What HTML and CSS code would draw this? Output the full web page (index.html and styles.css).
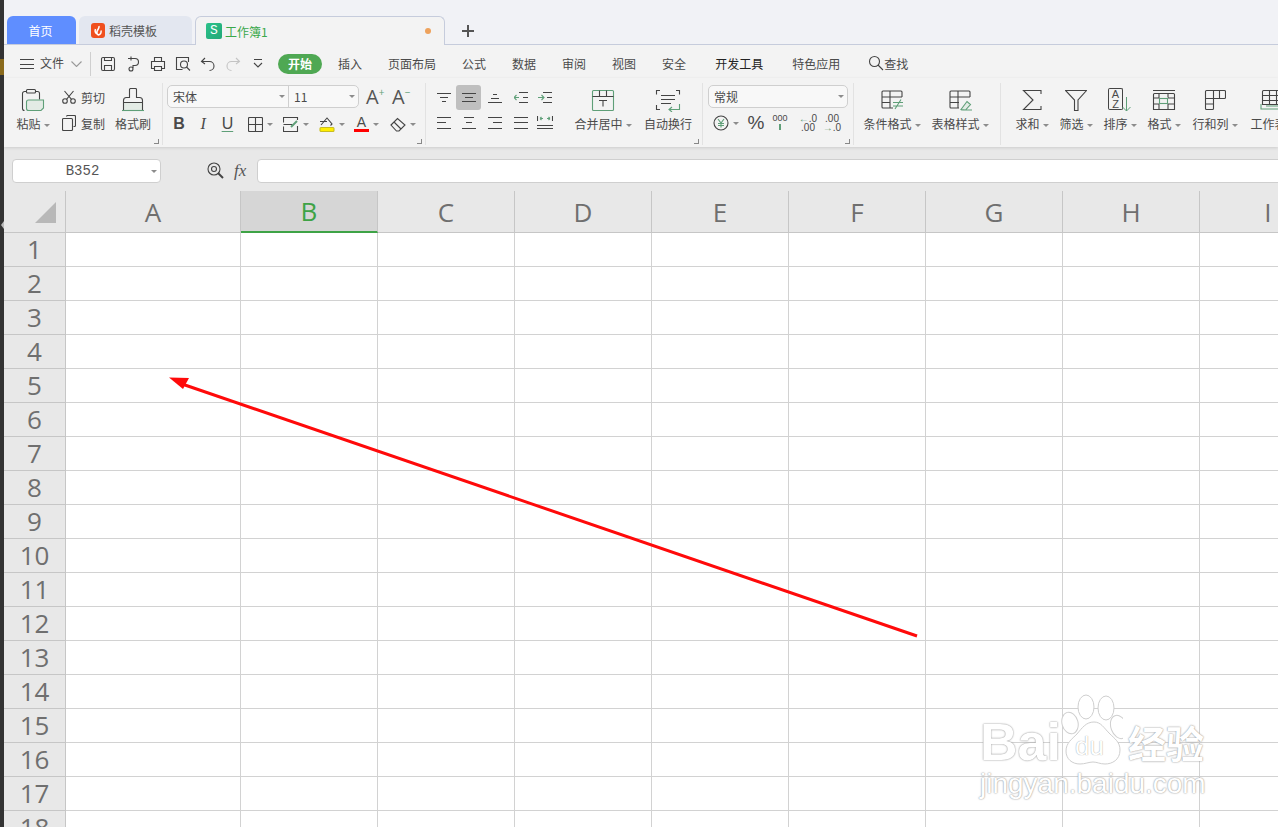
FILE: index.html
```html
<!DOCTYPE html>
<html lang="zh-CN">
<head>
    <meta charset="UTF-8">
    <title>工作簿1</title>
    <link rel="stylesheet" href="styles.css">
</head>
<body>
<aside class="side"><i class="side-gold"></i><i class="side-arrow"></i></aside>
<div class="app">

    <!-- onglets -->
    <div class="tabbar">
        <div class="tab tab-home">首页</div>
        <div class="tab tab-tpl">
            <svg class="logo" width="14" height="15" viewBox="0 0 14 15"><rect width="14" height="15" rx="3" fill="#f0501e"/><path d="M8 3c.5 2.500-1.500 3.500-2 5.500-.4 1.500.3 3 1.500 3.500 2-.5 3-2.500 2.500-4.500M4.500 6c-.8 2 0 4 1.500 5" fill="none" stroke="#fff" stroke-width="1.500"/></svg>
            稻壳模板
        </div>
        <div class="tab tab-book">
            <span class="logo-s">S</span>
            <span class="book-name">工作簿1</span>
            <i class="dot"></i>
        </div>
        <div class="plus">
            <svg width="12" height="12" viewBox="0 0 12 12"><path d="M6 0v12M0 6h12" stroke="#555" stroke-width="2"/></svg>
        </div>
    </div>

    <!-- menu -->
    <div class="menubar">
        <svg class="ic" width="14" height="12" viewBox="0 0 14 12"><path d="M0 1.500h14M0 6.500h14M0 10.500h14"/></svg>
        <span class="file">文件</span>
        <svg class="ic chev" width="11" height="6" viewBox="0 0 11 6"><path d="M.5.500l5 5 5-5"/></svg>
        <i class="menu-sep"></i>
        <div class="quick">
            <span><svg class="ic" width="16" height="16" viewBox="0 0 16 16"><path d="M3 1.500h10a1.500 1.500 0 0 1 1.500 1.500v10a1.500 1.500 0 0 1-1.500 1.500H3A1.500 1.500 0 0 1 1.500 13V3A1.500 1.500 0 0 1 3 1.500zM4.500 14.500v-5h7v5M4.500 1.500v3h7v-3"/></svg></span>
            <span><svg class="ic" width="16" height="16" viewBox="0 0 16 16"><path d="M6 2.500h4a3.500 3.500 0 0 1 0 7H8v2.500M3 2.500h3M6 .5v4"/><circle cx="6" cy="13" r="2"/></svg></span>
            <span><svg class="ic" width="16" height="16" viewBox="0 0 16 16"><path d="M4.500 5.500v-4h7v4M4.500 12.500h-3v-7h13v7h-3M4.500 10.500h7v4h-7z"/></svg></span>
            <span><svg class="ic" width="16" height="16" viewBox="0 0 16 16"><path d="M13.500 6V1.500h-12v12h6"/><circle cx="9" cy="8.500" r="3.500"/><path d="M11.500 11l3.500 3.500"/></svg></span>
            <span><svg class="ic" width="16" height="16" viewBox="0 0 16 16"><path d="M5 2L1.500 5.500 5 8M1.500 5.500h8a4.500 4.500 0 0 1 0 9"/></svg></span>
            <span><svg class="ic ic-off" width="16" height="16" viewBox="0 0 16 16"><path d="M11 2l3.500 3.500L11 8M14.500 5.500h-8a4.500 4.500 0 0 0 0 9"/></svg></span>
            <span><svg class="ic" width="12" height="10" viewBox="0 0 12 10"><path d="M2 .5h8M2 4l4 4 4-4"/></svg></span>
        </div>
        <div class="pill">开始</div>
        <nav class="menu-tabs">
            <a>插入</a>
            <a>页面布局</a>
            <a>公式</a>
            <a>数据</a>
            <a>审阅</a>
            <a>视图</a>
            <a>安全</a>
            <a class="menu-dev">开发工具</a>
            <a class="menu-extra">特色应用</a>
        </nav>
        <div class="find">
            <svg class="ic" width="16" height="16" viewBox="0 0 16 16"><circle cx="6.500" cy="6.500" r="5"/><path d="M10 10l5 5"/></svg>
            查找
        </div>
    </div>

    <!-- ruban -->
    <div class="ribbon">
        <section class="group g-clip">
            <div class="big w-paste">
                <svg class="ic" width="24" height="24" viewBox="0 0 24 24"><path d="M3.500 22.500a2 2 0 0 1-2-2v-15a2 2 0 0 1 2-2h13a2 2 0 0 1 2 2v6"/><rect x="5.500" y="1.500" width="9" height="3.500" rx="1" class="paper"/><path d="M5.500 14a2 2 0 0 1 2-2h15v8l-2.500 2.500H7.500a2 2 0 0 1-2-2z" class="gfill"/></svg>
                <span class="label">粘贴<i class="caret"></i></span>
            </div>
            <div class="stack">
                <div class="small">
                    <svg class="ic" width="14" height="14" viewBox="0 0 14 14"><circle cx="3" cy="11" r="2.300"/><circle cx="11" cy="11" r="2.300"/><path d="M4.500 9.300L11.500 1M9.500 9.300L2.500 1"/></svg>
                    剪切
                </div>
                <div class="small">
                    <svg class="ic" width="14" height="16" viewBox="0 0 14 16"><path d="M4.500 1.500a1 1 0 0 1 1-1h7a1 1 0 0 1 1 1v9a1 1 0 0 1-1 1h-1"/><rect x=".5" y="3.500" width="10" height="12" rx="1" class="paper"/></svg>
                    复制
                </div>
            </div>
            <div class="big w-brush">
                <svg class="ic" width="22" height="24" viewBox="0 0 22 24"><path d="M1.500 14.500h19v8h-19z" class="gfill gfill-noline"/><path d="M8.500 .5h5a1 1 0 0 1 1 1v8h3a3 3 0 0 1 3 3v10M1.500 22.500v-10a3 3 0 0 1 3-3h3v-8a1 1 0 0 1 1-1M1.500 14.500h19"/><path d="M0 22.500h22" class="gline"/></svg>
                <span class="label">格式刷</span>
            </div>
            <i class="launcher"></i>
        </section>

        <section class="group g-font">
            <div class="font-row">
                <div class="fontbox">
                    <div class="font-name">宋体<i class="caret"></i></div>
                    <div class="font-size">11<i class="caret"></i></div>
                </div>
                <span class="grow-a">A<sup>+</sup></span>
                <span class="grow-a grow-b">A<sup>−</sup></span>
            </div>
            <div class="fmt-row">
                <span class="fmt fmt-b">B</span>
                <span class="fmt fmt-i">I</span>
                <span class="fmt fmt-u">U</span>
                <div class="tools">
                    <span class="tool"><svg class="ic" width="15" height="15" viewBox="0 0 15 15"><rect x=".5" y=".5" width="14" height="14" rx="1"/><path d="M7.500 .5v14M.5 7.500h14"/></svg><i class="caret"></i></span>
                    <span class="tool"><svg class="ic" width="16" height="15" viewBox="0 0 16 15"><path d="M14.500 3V.5H.5v5M.5 9.500v5h14V9M.5 7.500h9"/><path d="M8 10l6-6" class="gline2"/></svg><i class="caret"></i></span>
                    <span class="tool"><svg class="ic" width="16" height="16" viewBox="0 0 16 16"><path d="M2 9l6-7 5 6-1.500 1.500M1 5.500h7"/><rect x="1" y="11.500" width="14" height="4" rx="1" class="yellow"/></svg><i class="caret"></i></span>
                    <span class="tool"><span class="color-a">A</span><i class="caret"></i></span>
                    <span class="tool"><svg class="ic" width="16" height="15" viewBox="0 0 16 15"><path d="M1 8l6.500-6.500L15 8l-6 6H6.500zM4 5l7 7"/></svg><i class="caret"></i></span>
                </div>
            </div>
            <i class="launcher"></i>
        </section>

        <section class="group g-align">
            <div class="align-grid">
                <span><svg class="ic" width="14" height="9" viewBox="0 0 14 9"><path d="M0 .5h14M3 4.500h8M5 8.500h4"/></svg></span>
                <span class="on"><svg class="ic" width="14" height="9" viewBox="0 0 14 9"><path d="M0 .5h14M3 4.500h8M0 8.500h14"/></svg></span>
                <span><svg class="ic" width="14" height="11" viewBox="0 0 14 11"><path d="M5 2.500h4M3 6.500h8M0 10.500h14"/></svg></span>
                <span><svg class="ic" width="14" height="11" viewBox="0 0 14 11"><path d="M5 .5h9M9 5.500h5M5 10.500h9"/><path d="M5 5.500H0M2.500 3L0 5.500 2.500 8" class="gline"/></svg></span>
                <span><svg class="ic" width="14" height="11" viewBox="0 0 14 11"><path d="M5 .5h9M9 5.500h5M5 10.500h9"/><path d="M0 5.500h6M3.500 3L6 5.500 3.500 8" class="gline"/></svg></span>
                <span><svg class="ic" width="14" height="12" viewBox="0 0 14 12"><path d="M0 .5h14M0 5.500h9M0 11.500h14"/></svg></span>
                <span><svg class="ic" width="14" height="12" viewBox="0 0 14 12"><path d="M2 .5h10M4 5.500h6M0 11.500h14"/></svg></span>
                <span><svg class="ic" width="14" height="12" viewBox="0 0 14 12"><path d="M0 .5h14M5 5.500h9M0 11.500h14"/></svg></span>
                <span><svg class="ic" width="14" height="12" viewBox="0 0 14 12"><path d="M0 .5h14M0 5.500h14M0 11.500h14"/></svg></span>
                <span><svg class="ic" width="16" height="13" viewBox="0 0 16 13"><path d="M.5 0v5M15.500 0v5M0 9.500h16M0 12.500h16"/><path d="M3 2.500h3M3 2.500l1.500-1.500M3 2.500l1.500 1.500M13 2.500h-3M13 2.500l-1.500-1.500M13 2.500l-1.500 1.500" class="gline"/></svg></span>
            </div>
            <div class="big w-merge">
                <svg class="ic" width="24" height="24" viewBox="0 0 24 24"><path d="M2.500 2.500h19a1 1 0 0 1 1 1v18a1 1 0 0 1-1 1h-19a1 1 0 0 1-1-1v-18a1 1 0 0 1 1-1z" class="gline"/><path d="M1.500 8.500h21M8.500 2.500v6M15.500 2.500v6M8 12.500h8M12 12.500v6"/></svg>
                <span class="label">合并居中<i class="caret"></i></span>
            </div>
            <div class="big w-wrap">
                <svg class="ic" width="26" height="24" viewBox="0 0 26 24"><path d="M5 2.500H1.500v4M21 2.500h3.500v4M1.500 17v4.500H5M6 7.500h14M6 11.500h14M6 15.500h10"/><path d="M24.500 16v5.500H14M17 19l-3 2.500 3 2.500" class="gline"/></svg>
                <span class="label">自动换行</span>
            </div>
            <i class="launcher"></i>
        </section>

        <section class="group g-num">
            <div class="numbox">常规<i class="caret"></i></div>
            <div class="num-row">
                <span class="num-yen"><svg class="ic" width="16" height="16" viewBox="0 0 16 16"><circle cx="8" cy="8" r="7"/><path d="M5 4l3 4 3-4M8 8v4.500M5 8.500h6M5 10.500h6" class="gline"/></svg><i class="caret"></i></span>
                <span class="num-pct">%</span>
                <span class="num-cell num-k">000<i class="num-tick"></i></span>
                <span class="num-cell num-dec"><b><em>←</em>.0</b><b>.00</b></span>
                <span class="num-cell num-dec"><b>.00</b><b><em>→</em>.0</b></span>
            </div>
            <i class="launcher"></i>
        </section>

        <section class="group g-style">
            <div class="big w-style">
                <svg class="ic" width="24" height="22" viewBox="0 0 24 22"><path d="M22 8V3a1 1 0 0 0-1-1H3a1 1 0 0 0-1 1v15a1 1 0 0 0 1 1h10M2 8h20M2 13.500h8M10 2v17"/><path d="M13 13.500h10M13 17h10M21 10.500L15 20" class="gline"/></svg>
                <span class="label">条件格式<i class="caret"></i></span>
            </div>
            <div class="big w-style">
                <svg class="ic" width="24" height="22" viewBox="0 0 24 22"><path d="M22 8V3a1 1 0 0 0-1-1H3a1 1 0 0 0-1 1v15a1 1 0 0 0 1 1h8M2 8h20M2 13.500h9M10 2v17"/><path d="M13 20.500l6-8 3.500 3-5 5.500zM13 21h11" class="gfill gfill-line"/></svg>
                <span class="label">表格样式<i class="caret"></i></span>
            </div>
        </section>

        <section class="group g-data">
            <div class="big w-44">
                <svg class="ic" width="20" height="22" viewBox="0 0 20 22"><path d="M19 5V1.500H1.500L11 11 1.500 20.500H19V17"/></svg>
                <span class="label">求和<i class="caret"></i></span>
            </div>
            <div class="big w-44">
                <svg class="ic" width="22" height="22" viewBox="0 0 22 22"><path d="M.5 1.500h21L13 11v10.500H9.500V11z"/></svg>
                <span class="label">筛选<i class="caret"></i></span>
            </div>
            <div class="big w-44">
                <span class="az"><b>A</b><b>Z</b>
                    <svg class="az-arrow" width="9" height="15" viewBox="0 0 9 15"><path d="M4.500 0v14M.5 10l4 4 4-4" class="gline"/></svg>
                </span>
                <span class="label">排序<i class="caret"></i></span>
            </div>
            <div class="big w-44">
                <svg class="ic" width="24" height="22" viewBox="0 0 24 22"><path d="M1 1.500h22M2.500 4.500h19a1 1 0 0 1 1 1v15h-21v-15a1 1 0 0 1 1-1zM1.500 9h6M16 9h6.500M1.500 15h6M16 15h6.500M7 4.500v4M16 4.500v4M7 15v5.500M16 15v5.500"/><rect x="7.500" y="9.500" width="8" height="5" class="gline"/></svg>
                <span class="label">格式<i class="caret"></i></span>
            </div>
            <div class="big w-58">
                <svg class="ic" width="22" height="22" viewBox="0 0 22 22"><path d="M2.500 1.500h18a1 1 0 0 1 1 1v6a1 1 0 0 1-1 1H9.500v10a1 1 0 0 1-1 1h-6a1 1 0 0 1-1-1v-17a1 1 0 0 1 1-1zM1.500 9.500h8M9.500 1.500v8M15.500 1.500v8M1.500 15h8"/></svg>
                <span class="label">行和列<i class="caret"></i></span>
            </div>
            <div class="big w-58">
                <svg class="ic" width="26" height="22" viewBox="0 0 26 22"><path d="M3.500 1.500h19a1 1 0 0 1 1 1v13h-21v-13a1 1 0 0 1 1-1zM2.500 6.500h21M2.500 11.500h21M9.500 1.500v14M16.500 1.500v14"/><path d="M1 15v5h24v-5M6 17h14" class="gline"/></svg>
                <span class="label">工作表<i class="caret"></i></span>
            </div>
        </section>
    </div>

    <!-- barre de formule -->
    <div class="formula">
        <div class="namebox">B352<i class="caret"></i></div>
        <svg class="ic zoom" width="17" height="17" viewBox="0 0 17 17"><circle cx="7" cy="7" r="6"/><circle cx="7" cy="7" r="2.500"/><path d="M11 11l5 5" stroke-width="2"/></svg>
        <span class="fx">fx</span>
        <div class="formula-input"></div>
    </div>

    <!-- feuille -->
    <table class="sheet">
        <colgroup><col class="col-head"><col class="col-a"><col class="col-n" span="8"></colgroup>
        <thead>
            <tr>
                <th class="corner"><i></i></th>
                <th>A</th><th class="sel">B</th><th>C</th><th>D</th><th>E</th><th>F</th><th>G</th><th>H</th><th>I</th>
            </tr>
        </thead>
        <tbody>
            <tr><th>1</th><td></td><td></td><td></td><td></td><td></td><td></td><td></td><td></td><td></td></tr>
            <tr><th>2</th><td></td><td></td><td></td><td></td><td></td><td></td><td></td><td></td><td></td></tr>
            <tr><th>3</th><td></td><td></td><td></td><td></td><td></td><td></td><td></td><td></td><td></td></tr>
            <tr><th>4</th><td></td><td></td><td></td><td></td><td></td><td></td><td></td><td></td><td></td></tr>
            <tr><th>5</th><td></td><td></td><td></td><td></td><td></td><td></td><td></td><td></td><td></td></tr>
            <tr><th>6</th><td></td><td></td><td></td><td></td><td></td><td></td><td></td><td></td><td></td></tr>
            <tr><th>7</th><td></td><td></td><td></td><td></td><td></td><td></td><td></td><td></td><td></td></tr>
            <tr><th>8</th><td></td><td></td><td></td><td></td><td></td><td></td><td></td><td></td><td></td></tr>
            <tr><th>9</th><td></td><td></td><td></td><td></td><td></td><td></td><td></td><td></td><td></td></tr>
            <tr><th>10</th><td></td><td></td><td></td><td></td><td></td><td></td><td></td><td></td><td></td></tr>
            <tr><th>11</th><td></td><td></td><td></td><td></td><td></td><td></td><td></td><td></td><td></td></tr>
            <tr><th>12</th><td></td><td></td><td></td><td></td><td></td><td></td><td></td><td></td><td></td></tr>
            <tr><th>13</th><td></td><td></td><td></td><td></td><td></td><td></td><td></td><td></td><td></td></tr>
            <tr><th>14</th><td></td><td></td><td></td><td></td><td></td><td></td><td></td><td></td><td></td></tr>
            <tr><th>15</th><td></td><td></td><td></td><td></td><td></td><td></td><td></td><td></td><td></td></tr>
            <tr><th>16</th><td></td><td></td><td></td><td></td><td></td><td></td><td></td><td></td><td></td></tr>
            <tr><th>17</th><td></td><td></td><td></td><td></td><td></td><td></td><td></td><td></td><td></td></tr>
            <tr><th>18</th><td></td><td></td><td></td><td></td><td></td><td></td><td></td><td></td><td></td></tr>
        </tbody>
    </table>
</div>

<!-- fleche rouge -->
<svg class="arrow" width="1278" height="827" viewBox="0 0 1278 827">
    <path d="M917 636L182 384" stroke="#ff0a0a" stroke-width="3" fill="none"/>
    <path d="M169 377.500L189 378 183 389z" fill="#ff0a0a"/>
</svg>

<!-- filigrane -->
<div class="mark">
    <div class="mark-top">
        <span class="mark-bai">Bai</span>
        <span class="mark-paw">
            <svg width="62" height="72" viewBox="0 0 62 72">
                <ellipse cx="25" cy="14" rx="8" ry="12"/>
                <ellipse cx="45" cy="15" rx="8" ry="12"/>
                <ellipse cx="9" cy="30" rx="8" ry="11" transform="rotate(-15 9 30)"/>
                <ellipse cx="58" cy="34" rx="8" ry="12" transform="rotate(-20 58 34)"/>
                <path d="M33 29c7 0 10 6 15 11 6 6 11 9 11 17 0 10-8 14-15 14-5 0-8-2-12-2s-8 2-13 2C11 71 5 66 5 58c0-8 6-12 11-17 5-6 9-12 17-12z"/>
            </svg>
            <span class="mark-du">du</span>
        </span>
        <span class="mark-cn">经验</span>
    </div>
    <div class="mark-url">jingyan.baidu.com</div>
</div>
</body>
</html>
```

FILE: styles.css
```css
* {
    box-sizing: border-box;
}
html, body {
    margin: 0;
    height: 100%;
}
body {
    display: flex;
    width: 1278px;
    height: 827px;
    overflow: hidden;
    position: relative;
    background: #fff;
    font-family: "Noto Sans CJK SC", "Noto Sans", sans-serif;
    font-size: 12px;
    color: #4a4a4a;
}
i, em {
    font-style: normal;
}
svg {
    display: block;
    flex: none;
}

/* bande sombre a gauche */
.side {
    width: 4px;
    flex: none;
    background: #333;
    padding-top: 59px;
    position: relative;
}
.side-gold {
    display: block;
    height: 16px;
    background: #8a6a1c;
}
.side-arrow {
    position: absolute;
    left: 1px;
    top: 221px;
    border: 4px solid transparent;
    border-left-width: 0;
    border-right: 3px solid #bbb;
}
.app {
    width: 1274px;
    flex: none;
    overflow: hidden;
}

/* icones */
.ic {
    fill: none;
    stroke: #444;
    stroke-width: 1.1;
}
.ic-off {
    stroke: #c4c4c4;
}
.ic .paper {
    fill: #f3f3f3;
}
.ic .gfill {
    fill: #e3ebe5;
    stroke: #5f9f78;
}
.ic .gfill-noline {
    stroke: none;
}
.ic .gline, .gline {
    stroke: #5f9f78;
    fill: none;
}
.ic .gline2 {
    stroke: #5f9f78;
    stroke-width: 2;
}
.ic .yellow {
    fill: #ffee00;
    stroke: #c9bc22;
}
.caret {
    display: inline-block;
    width: 0;
    height: 0;
    margin-left: 3px;
    vertical-align: middle;
    border-left: 3px solid transparent;
    border-right: 3px solid transparent;
    border-top: 3px solid #8c8c8c;
}

/* onglets */
.tabbar {
    height: 45px;
    padding-left: 3px;
    display: flex;
    align-items: flex-end;
    background: #f1f2f6;
    border-bottom: 1px solid #c6ccdc;
}
.tab {
    height: 28px;
    display: flex;
    align-items: center;
    border-radius: 6px 6px 0 0;
}
.tab-home {
    width: 69px;
    justify-content: center;
    padding-right: 2px;
    background: #5f8eff;
    color: #fff;
}
.tab-tpl {
    width: 113px;
    margin-left: 3px;
    padding-left: 12px;
    gap: 4px;
    background: #e3e7f0;
    color: #555;
}
.tab-book {
    width: 250px;
    height: 29px;
    margin-left: 3px;
    margin-bottom: -1px;
    padding: 0 13px 0 10px;
    background: #f3f3f3;
    border: 1px solid #c6ccdc;
    border-bottom: none;
}
.logo-s {
    width: 16px;
    height: 16px;
    border-radius: 2px;
    background: linear-gradient(135deg, #2cc28a, #22a878);
    color: #fff;
    font: 13px/16px "Liberation Mono", monospace;
    text-align: center;
}
.book-name {
    margin-left: 3px;
    color: #3aa84a;
}
.dot {
    width: 6px;
    height: 6px;
    margin-left: auto;
    border-radius: 50%;
    background: #eea25c;
}
.plus {
    margin: 0 0 7px 17px;
}

/* menu */
.menubar {
    height: 33px;
    padding: 5px 0 0 16px;
    display: flex;
    align-items: center;
    background: #f3f3f3;
}
.file {
    margin: -3px 0 0 6px;
}
.chev {
    margin-left: 7px;
    stroke: #999;
}
.menu-sep {
    width: 1px;
    height: 24px;
    margin-left: 8px;
    background: #cfcfcf;
}
.quick {
    display: flex;
    margin-left: 4px;
    align-items: center;
}
.quick span {
    width: 25px;
    display: flex;
    justify-content: center;
}
.pill {
    width: 44px;
    height: 20px;
    margin-left: 8px;
    border-radius: 10px;
    background: #4fa853;
    color: #fff;
    font-weight: 700;
    line-height: 19px;
    text-align: center;
}
.menu-tabs {
    display: flex;
    gap: 26px;
    margin: -2px 0 0 16px;
}
.menu-dev {
    margin-left: 3px;
    color: #222;
}
.menu-extra {
    margin-left: 3px;
}
.find {
    display: flex;
    align-items: center;
    margin: -2px 0 0 28px;
}

/* ruban */
.ribbon {
    height: 69px;
    padding-top: 5px;
    display: flex;
    background: #f3f3f3;
    box-shadow: 0 1px 3px rgba(0, 0, 0, .12);
    position: relative;
}
.group {
    height: 62px;
    flex: none;
    position: relative;
    border-right: 1px solid #e2e2e2;
}
.launcher {
    position: absolute;
    right: 3px;
    bottom: 1px;
    width: 5px;
    height: 5px;
    border-right: 1px solid #888;
    border-bottom: 1px solid #888;
}
.big {
    height: 62px;
    padding-top: 5px;
    flex: none;
    display: flex;
    flex-direction: column;
    align-items: center;
}
.big > svg, .big > .az {
    height: 24px;
}
.label {
    margin-top: 4px;
    line-height: 16px;
    white-space: nowrap;
}
.w-paste {
    width: 38px;
}
.w-brush {
    width: 50px;
}
.w-merge {
    width: 60px;
    margin-left: 16px;
}
.w-wrap {
    width: 66px;
    margin-left: 2px;
}
.w-style {
    width: 68px;
}
.w-44 {
    width: 44px;
}
.w-58 {
    width: 58px;
}
.g-clip {
    width: 159px;
    padding-left: 10px;
    display: flex;
}
.stack {
    width: 46px;
    margin-left: 10px;
    padding-top: 1px;
}
.small {
    height: 26px;
    display: flex;
    align-items: center;
    gap: 5px;
}

/* police */
.g-font {
    width: 263px;
    padding-left: 4px;
}
.font-row {
    height: 23px;
    margin-top: 2px;
    display: flex;
    align-items: center;
}
.fontbox {
    width: 192px;
    height: 23px;
    display: flex;
    background: #f8f8f8;
    border: 1px solid #cfcfcf;
    border-radius: 5px;
}
.font-name, .font-size, .numbox {
    display: flex;
    align-items: center;
    justify-content: space-between;
    padding: 0 3px 0 5px;
}
.font-name {
    width: 121px;
    border-right: 1px solid #cfcfcf;
}
.font-size {
    flex: 1;
}
.grow-a {
    width: 25px;
    margin-left: 7px;
    font: 20px/23px "Open Sans", sans-serif;
    color: #555;
    white-space: nowrap;
}
.grow-b {
    margin-left: 1px;
}
.grow-a sup {
    font-size: 10px;
    line-height: 0;
    color: #5f9f78;
}
.fmt-row {
    height: 26px;
    margin-top: 3px;
    display: flex;
    align-items: center;
}
.fmt {
    width: 25px;
    text-align: center;
    font: 16px/20px "Liberation Sans", sans-serif;
}
.fmt-b {
    font-weight: 700;
}
.fmt-i {
    font-family: "Liberation Serif", serif;
    font-style: italic;
}
.fmt-u {
    text-decoration: underline;
    text-decoration-color: #5f9f78;
    text-underline-offset: 2px;
}
.tools {
    display: flex;
    margin-left: 8px;
}
.tool {
    width: 35.5px;
    display: flex;
    align-items: center;
}
.tool .caret {
    margin-left: 4px;
}
.color-a {
    width: 15px;
    font: 14px/13px "Liberation Sans", sans-serif;
    text-align: center;
    border-bottom: 3px solid #f00;
}

/* alignement */
.g-align {
    width: 277px;
    padding-left: 5px;
    display: flex;
}
.align-grid {
    display: grid;
    grid-template-columns: 25px 25px 28px 24px 24px;
    grid-auto-rows: 25px;
    margin-top: 2px;
}
.align-grid span {
    display: flex;
    align-items: center;
    justify-content: center;
}
.align-grid .on {
    background: #bfbfbf;
    border-radius: 3px;
}

/* nombre */
.g-num {
    width: 151px;
    padding-left: 5px;
}
.numbox {
    width: 140px;
    height: 23px;
    margin-top: 2px;
    background: #f8f8f8;
    border: 1px solid #cfcfcf;
    border-radius: 5px;
}
.num-row {
    height: 26px;
    margin-top: 2px;
    display: flex;
    align-items: center;
}
.num-yen {
    width: 36px;
    padding-left: 5px;
    display: flex;
    align-items: center;
}
.num-yen .caret {
    margin-left: 4px;
}
.num-pct {
    width: 24px;
    text-align: center;
    font: 19px/24px "Liberation Sans", sans-serif;
}
.num-cell {
    width: 24px;
    position: relative;
    text-align: center;
    font: 10px/9px "Liberation Sans", sans-serif;
}
.num-k {
    height: 18px;
    margin-right: 4px;
    font-size: 9px;
}
.num-tick {
    position: absolute;
    left: 11px;
    top: 10px;
    width: 2px;
    height: 6px;
    background: #5f9f78;
}
.num-dec b {
    display: block;
    font-weight: 400;
}
.num-dec em {
    color: #5f9f78;
}

/* styles et donnees */
.g-style {
    width: 147px;
    padding-left: 4px;
    display: flex;
}
.g-data {
    padding-left: 9px;
    display: flex;
    border-right: none;
}
.az {
    width: 24px;
    display: block;
    position: relative;
    text-align: left;
}
.az b {
    display: block;
    width: 15px;
    height: 11px;
    border-left: 1px solid #444;
    border-right: 1px solid #444;
    font: 11px/11px "Liberation Sans", sans-serif;
    text-align: center;
}
.az b:first-child {
    border-top: 1px solid #444;
    border-radius: 2px 2px 0 0;
}
.az b:nth-child(2) {
    border-bottom: 1px solid #444;
    border-radius: 0 0 2px 2px;
}
.az-arrow {
    position: absolute;
    left: 14px;
    top: 9px;
}

/* barre de formule */
.formula {
    height: 44px;
    padding: 12px 0 0 8px;
    display: flex;
    background: #e8e8e8;
}
.namebox {
    width: 149px;
    height: 24px;
    flex: none;
    position: relative;
    background: #fff;
    border: 1px solid #cfcfcf;
    border-radius: 4px;
    font: 14px/22px "Liberation Mono", monospace;
    color: #555;
    text-align: center;
    padding-right: 8px;
}
.namebox .caret {
    position: absolute;
    right: 3px;
    top: 10px;
}
.zoom {
    margin: 3px 0 0 46px;
}
.fx {
    width: 18px;
    flex: none;
    margin-left: 10px;
    font: italic 17px/24px "Liberation Serif", serif;
    color: #555;
}
.formula-input {
    width: 1030px;
    height: 24px;
    flex: none;
    margin-left: 5px;
    background: #fff;
    border: 1px solid #cfcfcf;
    border-radius: 4px 0 0 4px;
}

/* feuille */
.sheet {
    width: 1333px;
    table-layout: fixed;
    border-collapse: separate;
    border-spacing: 0;
}
.col-head {
    width: 62px;
}
.col-a {
    width: 175px;
}
.col-n {
    width: 137px;
}
.sheet th {
    padding: 0;
    background: #e8e8e8;
    border-right: 1px solid #c6c6c6;
    border-bottom: 1px solid #c6c6c6;
    font: 400 26px/33px "Open Sans", sans-serif;
    color: #6f6f6f;
}
.sheet thead th {
    height: 42px;
    line-height: 40px;
}
.sheet thead .sel {
    background: #d6d6d6;
    color: #3ea346;
    border-bottom: 2px solid #3ea346;
}
.sheet tbody tr {
    height: 34px;
}
.sheet td {
    border-right: 1px solid #d2d2d2;
    border-bottom: 1px solid #d2d2d2;
}
.corner {
    position: relative;
}
.corner i {
    position: absolute;
    left: 31px;
    top: 11px;
    border-left: 21px solid transparent;
    border-bottom: 21px solid #b8b8b8;
}

/* fleche */
.arrow {
    position: absolute;
    left: 0;
    top: 0;
    pointer-events: none;
}

/* filigrane */
.mark {
    position: absolute;
    left: 980px;
    top: 690px;
    width: 232px;
    color: #fff;
    text-shadow: 0 0 2px #9a9a9a, 0 0 1px #b0b0b0;
}
.mark-top {
    display: flex;
    align-items: flex-end;
    height: 75px;
}
.mark-bai {
    font: 700 52px/52px "Liberation Sans", sans-serif;
    margin-bottom: -3px;
}
.mark-paw {
    position: relative;
    width: 65px;
}
.mark-paw svg {
    fill: #fff;
    stroke: #cfcfcf;
    stroke-width: 1;
}
.mark-du {
    position: absolute;
    left: 14px;
    top: 38px;
    font: 26px/30px "Liberation Sans", sans-serif;
    color: #fff;
    text-shadow: 0 0 1px #888;
}
.mark-cn {
    font-size: 38px;
    font-weight: 700;
    line-height: 46px;
    margin-left: 2px;
}
.mark-url {
    margin-top: 2px;
    font: 28px/34px "Liberation Sans", sans-serif;
    white-space: nowrap;
}
```
